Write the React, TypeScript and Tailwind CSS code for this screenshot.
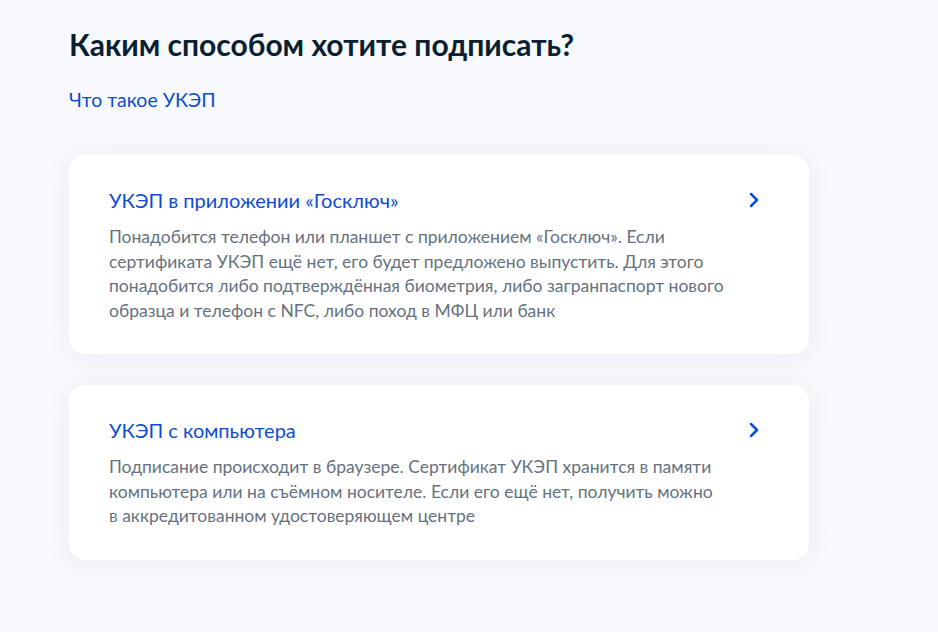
import React from "react";

const options = [
  {
    title: "УКЭП в приложении «Госключ»",
    text: "Понадобится телефон или планшет с приложением «Госключ». Если сертификата УКЭП ещё нет, его будет предложено выпустить. Для этого понадобится либо подтверждённая биометрия, либо загранпаспорт нового образца и телефон с NFC, либо поход в МФЦ или банк",
  },
  {
    title: "УКЭП с компьютера",
    text: "Подписание происходит в браузере. Сертификат УКЭП хранится в памяти компьютера или на съёмном носителе. Если его ещё нет, получить можно в аккредитованном удостоверяющем центре",
  },
];

function Chevron() {
  return (
    <svg width="12" height="16" viewBox="0 0 12 16" fill="none">
      <path d="M3 2l6 6-6 6" stroke="#0d4cd3" strokeWidth="2.5" strokeLinecap="round" strokeLinejoin="round" />
    </svg>
  );
}

export default function App() {
  return (
    <div
      className="min-h-[632px] w-full bg-[#f8f9fd] text-[#0b1f33]"
      style={{ fontFamily: "Lato, 'Noto Sans', sans-serif" }}
    >
      <div className="px-[69px] pt-[26px]">
        <h1 className="text-[30px] font-bold leading-[36px] text-[#0b1f33]">Каким способом хотите подписать?</h1>
        <a href="#" className="mt-[26px] block w-fit text-[19.5px] leading-[24px] text-[#0d4cd3]">
          Что такое УКЭП
        </a>

        <div className="mt-[43px] flex w-[740px] flex-col gap-[31px]">
          {options.map((o) => (
            <div
              key={o.title}
              className="flex items-start gap-4 rounded-2xl bg-white px-10 pt-8 pb-[31px] shadow-[0_2px_30px_rgba(11,31,51,0.06)]"
            >
              <div className="flex-1">
                <div className="text-[20px] leading-[26px] text-[#0d4cd3]">{o.title}</div>
                <p className="mt-3 max-w-[616px] text-[17.5px] leading-[24.5px] text-[#66727f]">{o.text}</p>
              </div>
              <div className="mt-[5px] mr-[9px] flex h-4 w-3 items-center justify-center">
                <Chevron />
              </div>
            </div>
          ))}
        </div>
      </div>
    </div>
  );
}
